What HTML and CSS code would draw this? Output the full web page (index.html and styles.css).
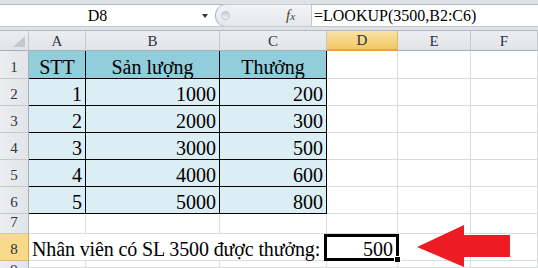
FILE: index.html
```html
<!DOCTYPE html>
<html>
<head>
<meta charset="utf-8">
<link rel="stylesheet" href="styles.css">
</head>
<body>
<div class="chrome-top"></div>
<div class="fbar">
  <div class="namebox"><span class="name">D8</span><span class="drop"></span></div>
  <div class="pill"><span class="dot"></span><span class="fx">f<span class="fxx">x</span></span></div>
  <div class="formula">=LOOKUP(3500,B2:C6)</div>
</div>
<div class="gap"></div>
<div class="sheet">
  <div class="h corner"><span class="tri"></span></div>
  <div class="h">A</div><div class="h">B</div><div class="h">C</div><div class="h hsel">D</div><div class="h">E</div><div class="h">F</div>

  <div class="r">1</div>
  <div class="c t th">STT</div><div class="c t th">Sản lượng</div><div class="c t th">Thưởng</div><div class="c"></div><div class="c"></div><div class="c"></div>

  <div class="r">2</div>
  <div class="c t td">1</div><div class="c t td">1000</div><div class="c t td">200</div><div class="c"></div><div class="c"></div><div class="c"></div>

  <div class="r">3</div>
  <div class="c t td">2</div><div class="c t td">2000</div><div class="c t td">300</div><div class="c"></div><div class="c"></div><div class="c"></div>

  <div class="r">4</div>
  <div class="c t td">3</div><div class="c t td">3000</div><div class="c t td">500</div><div class="c"></div><div class="c"></div><div class="c"></div>

  <div class="r">5</div>
  <div class="c t td">4</div><div class="c t td">4000</div><div class="c t td">600</div><div class="c"></div><div class="c"></div><div class="c"></div>

  <div class="r">6</div>
  <div class="c t td">5</div><div class="c t td">5000</div><div class="c t td">800</div><div class="c"></div><div class="c"></div><div class="c"></div>

  <div class="r">7</div>
  <div class="c"></div><div class="c"></div><div class="c"></div><div class="c"></div><div class="c"></div><div class="c"></div>

  <div class="r rsel">8</div>
  <div class="c label">Nhân viên có SL 3500 được thưởng:</div><div class="c num active">500<span class="selbox"><span class="handle"></span></span></div><div class="c"></div><div class="c"></div>

  <div class="r r9">9</div>
  <div class="c"></div><div class="c"></div><div class="c"></div><div class="c"></div><div class="c"></div><div class="c"></div>
</div>
<svg class="redarrow" width="94" height="43" viewBox="0 0 94 43"><polygon points="0,22 47,0 47,10 93,10 93,32 47,32 47,42" fill="#ed1c24"/></svg>
</body>
</html>
```
FILE: styles.css
```css
html, body { margin: 0; padding: 0; }
body {
  width: 538px; height: 268px; overflow: hidden; position: relative;
  background: #dfe3e8;
  font-family: "Liberation Serif", "Times New Roman", serif;
}
.chrome-top { height: 4px; background: #dfe3e8; border-bottom: 1px solid #b3b9c1; }
.fbar { display: flex; height: 21px; background: #fff; border-bottom: 1px solid #c3c8cf; }
.namebox { width: 215px; display: flex; align-items: center; }
.name { width: 195px; text-align: center; font-size: 16px; line-height: 21px; color: #000; }
.drop { width: 0; height: 0; border-left: 3px solid transparent; border-right: 3px solid transparent; border-top: 4px solid #333; margin-left: 7px; }
.pill {
  width: 96px; box-sizing: border-box; display: flex; align-items: center;
  background: linear-gradient(#f3f4f6, #e4e7eb);
  border: 1px solid #b3b9c1; border-right: 0; border-top-color: #c8ccd2; border-bottom-color: #c8ccd2;
  border-radius: 11px 0 0 11px; margin-top: -1px; margin-bottom: -1px; height: 23px;
}
.dot {
  width: 7px; height: 7px; border-radius: 50%; margin-left: 5px;
  background: linear-gradient(#c9ced4, #f2f3f5); border: 1px solid #c0c5cb;
}
.fx { margin-left: 56px; font-style: italic; font-size: 15px; color: #444; line-height: 21px; }
.fxx { font-size: 11px; }
.formula { flex: 1; border-left: 1px solid #c3c8cf; padding-left: 2px; font-size: 16px; line-height: 21px; color: #000; }
.gap { height: 3px; }
.sheet {
  display: grid; background: #fff; border-top: 1px solid #b3b9c1;
  grid-template-columns: 29px 57px 134px 107px 71px 73px 1fr;
  grid-template-rows: 20px 28px 27px 27px 27px 27px 27px 20px 27px 7px;
  overflow: hidden;
}
.h, .r, .c { box-sizing: border-box; border-right: 1px solid #dadcdd; border-bottom: 1px solid #dadcdd; }
.h {
  background: linear-gradient(#eceef1, #e1e4e8); border-right-color: #c5c9ce; border-bottom-color: #a9b0b8;
  display: flex; align-items: center; justify-content: center;
  font-size: 15px; line-height: 18px; color: #2b3541;
}
.corner { position: relative; }
.tri {
  position: absolute; right: 3px; bottom: 3px; width: 0; height: 0;
  border-left: 12px solid transparent; border-bottom: 11px solid #c4c8cd;
}
.hsel { background: linear-gradient(#f9e3a6, #f3c865); border-bottom: 2px solid #f2a03d; border-right-color: #e1b862; }
.r {
  background: linear-gradient(90deg, #eceef1, #e1e4e8); border-right-color: #a9b0b8; border-bottom-color: #c5c9ce;
  display: flex; align-items: flex-end; justify-content: center;
  font-size: 15px; line-height: 22px; color: #2b3541;
}
.r9 { align-items: flex-start; line-height: 18px; overflow: hidden; border-bottom: 0; }
.rsel { background: #f9d98a; border-right: 1px solid #eb9c3d; border-bottom-color: #e6b66b; }
.c {
  display: flex; align-items: flex-end; justify-content: flex-end;
  font-size: 20px; line-height: 22px; color: #000; padding: 0 3px;
}
.t { border-right-color: #000; border-bottom-color: #000; }
.th { background: #92cddc; justify-content: center; }
.td { background: #daeef3; }
.label { grid-column: 2 / 5; justify-content: flex-start; padding-left: 3px; white-space: nowrap; letter-spacing: -0.12px; }
.active { position: relative; padding-right: 4px; }
.selbox { position: absolute; left: -3px; top: 0; right: -2px; bottom: -1px; border: 3px solid #000; box-sizing: border-box; }
.handle { position: absolute; right: -5px; bottom: -5px; width: 5px; height: 5px; background: #000; border: 1px solid #fff; }
.redarrow { position: absolute; left: 417px; top: 225px; }
```
